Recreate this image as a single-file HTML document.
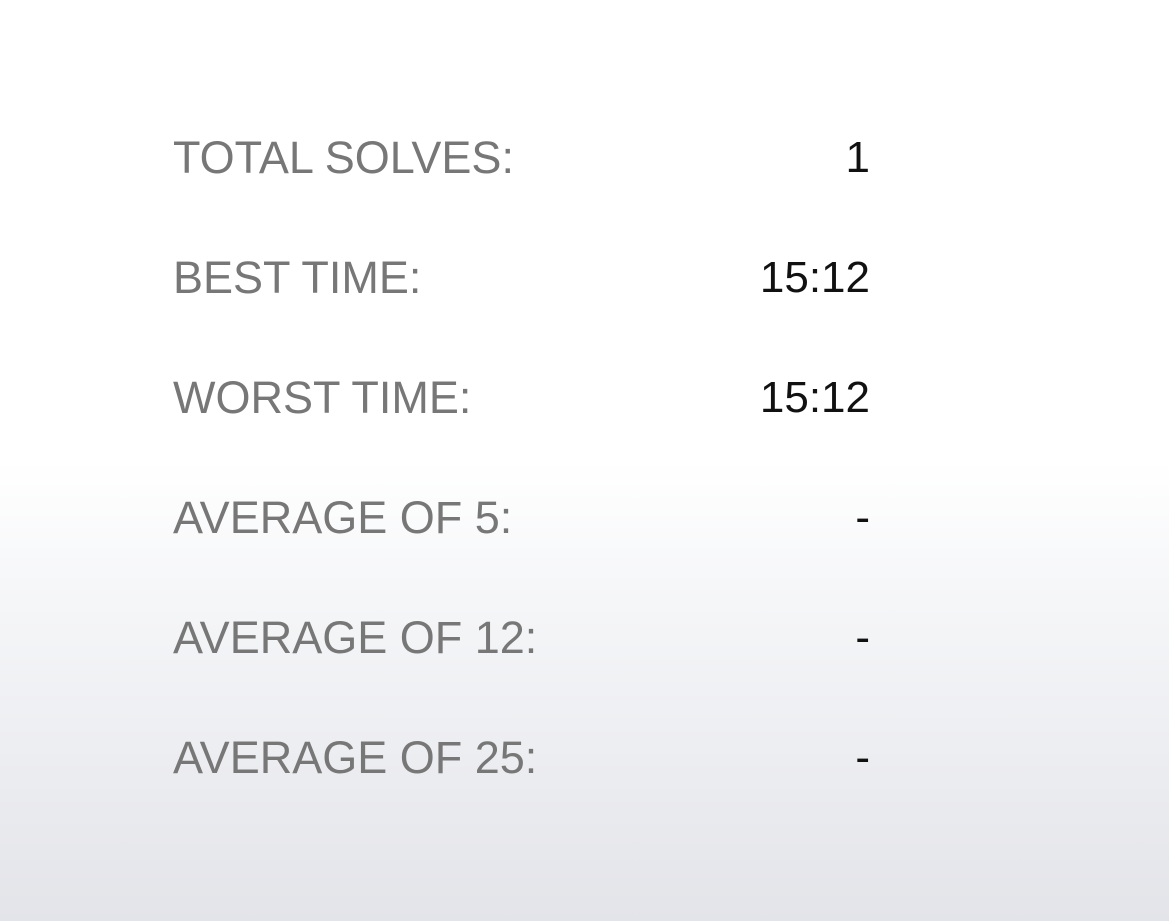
<!DOCTYPE html>
<html><head><meta charset="utf-8"><style>
html,body{margin:0;padding:0;}
body{width:1169px;height:921px;overflow:hidden;font-family:"Liberation Sans",Arial,sans-serif;
background:linear-gradient(to bottom,#ffffff 0px,#ffffff 460px,#f5f6f8 600px,#e3e4e9 921px);position:relative;}
.row{position:absolute;left:173px;width:697px;height:60px;line-height:60px;}
.l{position:absolute;left:0;top:0;color:#777777;font-size:45px;}
.v{position:absolute;right:0;top:0;color:#111111;font-size:44px;}
</style></head><body>
<div class="row" style="top:128px"><span class="l">TOTAL SOLVES:</span><span class="v">1</span></div>
<div class="row" style="top:248px"><span class="l">BEST TIME:</span><span class="v">15:12</span></div>
<div class="row" style="top:368px"><span class="l">WORST TIME:</span><span class="v">15:12</span></div>
<div class="row" style="top:488px"><span class="l">AVERAGE OF 5:</span><span class="v">-</span></div>
<div class="row" style="top:608px"><span class="l">AVERAGE OF 12:</span><span class="v">-</span></div>
<div class="row" style="top:728px"><span class="l">AVERAGE OF 25:</span><span class="v">-</span></div>
</body></html>
